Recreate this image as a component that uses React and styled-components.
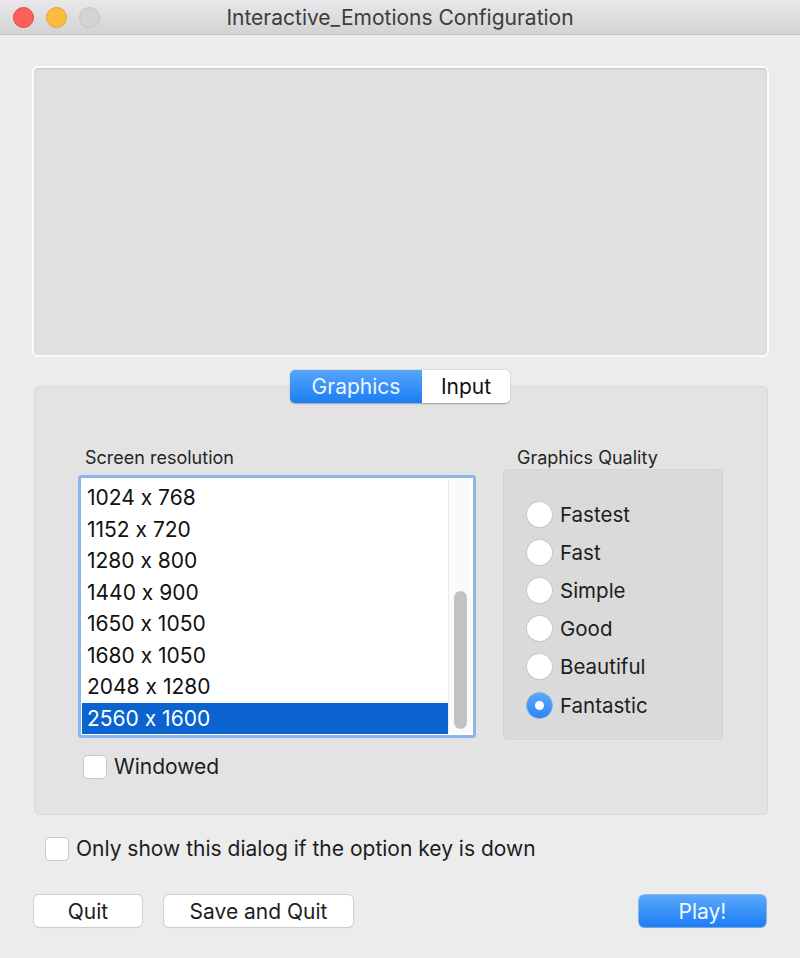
import styled, { createGlobalStyle } from "styled-components";

const Global = createGlobalStyle`
  html, body {
    margin: 0;
    padding: 0;
    background: #ececec;
  }
  * {
    box-sizing: border-box;
  }
`;

const Window = styled.div`
  width: 800px;
  height: 958px;
  background: #ececec;
  font-family: "Inter", "Liberation Sans", sans-serif;
  font-feature-settings: "calt" 0;
  color: #1d1d1d;
  display: flex;
  flex-direction: column;
  overflow: hidden;
`;

const TitleBar = styled.div`
  height: 35px;
  flex-shrink: 0;
  background: linear-gradient(#e9e7e9, #d4d3d4);
  border-bottom: 1px solid #c4c4c4;
  display: flex;
  align-items: center;
  padding-left: 13px;
  position: relative;
`;

const Light = styled.span`
  width: 21px;
  height: 21px;
  border-radius: 50%;
  margin-right: 12px;
  background: ${(p) => p.color};
  border: 1px solid ${(p) => p.edge};
`;

const Title = styled.div`
  position: absolute;
  left: 0;
  right: 0;
  text-align: center;
  font-size: 21px;
  color: #3c3c3c;
  pointer-events: none;
`;

const Content = styled.div`
  display: flex;
  flex-direction: column;
  padding: 31px 31px 0 32px;
`;

const Preview = styled.div`
  width: 737px;
  height: 291px;
  background: #e0e0e0;
  border: 2px solid #fbfbfb;
  box-shadow: inset 0 1px 2px rgba(0, 0, 0, 0.12);
  border-radius: 6px;
`;

const TabArea = styled.div`
  display: flex;
  flex-direction: column;
  align-items: center;
  margin-top: 13px;
  margin-left: 2px;
  width: 734px;
`;

const Segments = styled.div`
  display: flex;
  position: relative;
  z-index: 1;
  margin-left: -2px;
  border-radius: 5px;
  box-shadow: 0 0.5px 1.5px rgba(0, 0, 0, 0.3);
  overflow: hidden;
`;

const Segment = styled.div`
  height: 33px;
  width: ${(p) => p.w}px;
  display: flex;
  align-items: center;
  justify-content: center;
  font-size: 21px;
  color: ${(p) => (p.active ? "#eef5ff" : "#111")};
  background: ${(p) =>
    p.active ? "linear-gradient(#55a5fb, #1b7ef5)" : "#ffffff"};
`;

const Panel = styled.div`
  width: 734px;
  height: 429px;
  margin-top: -17px;
  background: #e3e3e3;
  border: 1px solid #d9d9d9;
  border-radius: 5px;
  display: flex;
  padding: 60px 0 0 43px;
  gap: 27px;
`;

const Column = styled.div`
  display: flex;
  flex-direction: column;
`;

const GroupLabel = styled.div`
  font-size: 18px;
  line-height: 22px;
  height: 22px;
  color: #262626;
  padding-left: ${(p) => p.indent || 0}px;
`;

const ListBox = styled.div`
  margin-top: 6px;
  width: 398px;
  height: 263px;
  border: 3px solid #8ab6ea;
  border-radius: 3px;
  background: #fff;
  display: flex;
  padding: 1px 0 0 1px;
`;

const Rows = styled.div`
  width: 366px;
  display: flex;
  flex-direction: column;
  padding-top: 3px;
`;

const Row = styled.div`
  height: 31.5px;
  line-height: 31.5px;
  padding-left: 5px;
  font-size: 21px;
  color: ${(p) => (p.selected ? "#fff" : "#111")};
  background: ${(p) => (p.selected ? "#0b63d0" : "transparent")};
`;

const ScrollTrack = styled.div`
  width: 23px;
  margin-bottom: 2px;
  background: #fafafa;
  border-left: 1px solid #ececec;
  display: flex;
  flex-direction: column;
  align-items: center;
  justify-content: flex-end;
  padding-bottom: 4px;
`;

const Thumb = styled.div`
  width: 13px;
  height: 138px;
  border-radius: 7px;
  background: #c2c2c2;
`;

const CheckRow = styled.label`
  display: flex;
  align-items: center;
  gap: 8px;
  font-size: 21px;
  color: #1d1d1d;
  margin-top: ${(p) => p.top}px;
  margin-left: ${(p) => p.left}px;
`;

const Box = styled.span`
  width: 22px;
  height: 22px;
  background: #fff;
  border-radius: 4px;
  box-shadow: 0 0 0 1px #c8c8c8, 0 1px 1px rgba(0, 0, 0, 0.1);
`;

const QualityBox = styled.div`
  width: 220px;
  height: 271px;
  background: #dadada;
  border-radius: 5px;
  border: 1px solid #d4d4d4;
  padding: 25px 0 0 23px;
  display: flex;
  flex-direction: column;
`;

const RadioRow = styled.div`
  height: 38.2px;
  display: flex;
  align-items: center;
  gap: 8px;
  font-size: 20.5px;
  color: #1d1d1d;
`;

const Radio = styled.span`
  width: 25px;
  height: 25px;
  border-radius: 50%;
  display: flex;
  align-items: center;
  justify-content: center;
  background: ${(p) => (p.checked ? "linear-gradient(#5aa9fb, #2a86f5)" : "#fff")};
  box-shadow: ${(p) =>
    p.checked ? "0 0 0 0.5px #2d7fe0" : "0 0 0 1px #c9c9c9, 0 1px 1px rgba(0,0,0,0.08)"};
  &::after {
    content: "";
    display: ${(p) => (p.checked ? "block" : "none")};
    width: 9px;
    height: 9px;
    border-radius: 50%;
    background: #fff;
  }
`;

const ButtonBar = styled.div`
  display: flex;
  align-items: center;
  margin-top: 34px;
  margin-left: 2px;
  width: 732px;
`;

const Button = styled.div`
  height: 32px;
  width: ${(p) => p.w}px;
  margin-right: ${(p) => p.gap || 0}px;
  margin-left: ${(p) => (p.push ? "auto" : "0")};
  border-radius: 5px;
  display: flex;
  align-items: center;
  justify-content: center;
  font-size: 21px;
  color: ${(p) => (p.primary ? "#f2f7ff" : "#1d1d1d")};
  background: ${(p) =>
    p.primary ? "linear-gradient(#5aa8fb, #1b7df5)" : "#ffffff"};
  box-shadow: ${(p) =>
    p.primary
      ? "0 0 0 0.5px #2f7fe0, 0 1px 1px rgba(0,0,0,0.15)"
      : "0 0 0 1px #cfcfcf, 0 1px 1px rgba(0,0,0,0.12)"};
`;

const resolutions = [
  "1024 x 768",
  "1152 x 720",
  "1280 x 800",
  "1440 x 900",
  "1650 x 1050",
  "1680 x 1050",
  "2048 x 1280",
  "2560 x 1600",
];

const qualities = ["Fastest", "Fast", "Simple", "Good", "Beautiful", "Fantastic"];

export default function App() {
  return (
    <>
      <Global />
      <Window>
        <TitleBar>
          <Light color="#fc605b" edge="#e14640" />
          <Light color="#fdbc40" edge="#dea236" />
          <Light color="#d5d3d5" edge="#c4c2c4" />
          <Title>Interactive_Emotions Configuration</Title>
        </TitleBar>
        <Content>
          <Preview />
          <TabArea>
            <Segments>
              <Segment active w={132}>Graphics</Segment>
              <Segment w={88}>Input</Segment>
            </Segments>
            <Panel>
              <Column>
                <GroupLabel indent={7}>Screen resolution</GroupLabel>
                <ListBox>
                  <Rows>
                    {resolutions.map((r, i) => (
                      <Row key={r} selected={i === resolutions.length - 1}>
                        {r}
                      </Row>
                    ))}
                  </Rows>
                  <ScrollTrack>
                    <Thumb />
                  </ScrollTrack>
                </ListBox>
                <CheckRow top={16} left={6}>
                  <Box />
                  Windowed
                </CheckRow>
              </Column>
              <Column>
                <GroupLabel indent={14}>Graphics Quality</GroupLabel>
                <QualityBox>
                  {qualities.map((q) => (
                    <RadioRow key={q}>
                      <Radio checked={q === "Fantastic"} />
                      {q}
                    </RadioRow>
                  ))}
                </QualityBox>
              </Column>
            </Panel>
          </TabArea>
          <CheckRow top={21} left={14}>
            <Box />
            Only show this dialog if the option key is down
          </CheckRow>
          <ButtonBar>
            <Button w={108} gap={22}>Quit</Button>
            <Button w={189}>Save and Quit</Button>
            <Button w={127} push primary>
              Play!
            </Button>
          </ButtonBar>
        </Content>
      </Window>
    </>
  );
}
